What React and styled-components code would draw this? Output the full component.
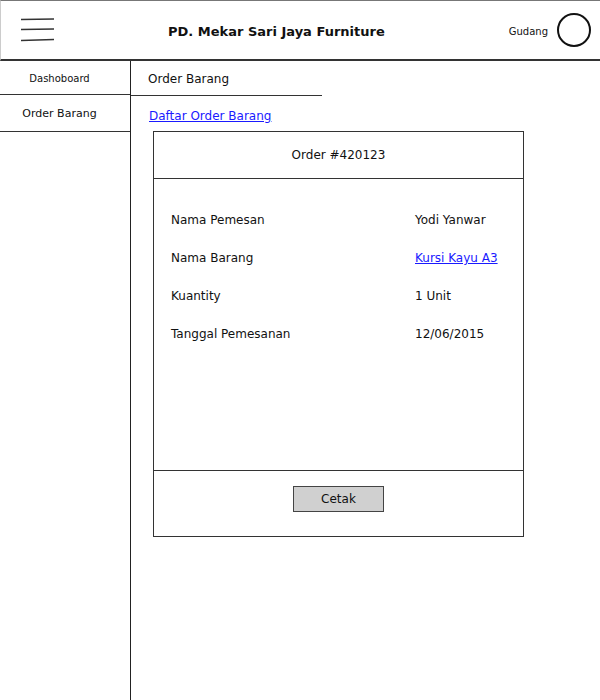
import React from "react";
import styled, { createGlobalStyle } from "styled-components";

const Global = createGlobalStyle`
	body {
		margin: 0;
		background: #fff;
		font-family: "DejaVu Sans", "Liberation Sans", sans-serif;
		color: #111;
	}
`;

const orderRows = [
	{ label: "Nama Pemesan", value: "Yodi Yanwar" },
	{ label: "Nama Barang", value: "Kursi Kayu A3", link: true },
	{ label: "Kuantity", value: "1 Unit" },
	{ label: "Tanggal Pemesanan", value: "12/06/2015" },
];

const App = () => {
	return (
		<Page>
			<Global />
			<Header>
				<Burger viewBox="0 0 36 26">
					<path d="M1 1.5 L34 1" />
					<path d="M1 11.5 L34 11" />
					<path d="M1 22.5 L34 21.5" />
				</Burger>
				<Title>PD. Mekar Sari Jaya Furniture</Title>
				<User>
					<span>Gudang</span>
					<svg width="36" height="36" viewBox="0 0 36 36">
						<circle cx="18" cy="18" r="16" fill="none" stroke="#111" strokeWidth="2" />
					</svg>
				</User>
			</Header>
			<Body>
				<Sidebar>
					<NavItem $h={34} $size={10}>Dashoboard</NavItem>
					<NavItem $h={36} $size={11}>Order Barang</NavItem>
				</Sidebar>
				<Main>
					<Tab>Order Barang</Tab>
					<Crumb href="#">Daftar Order Barang</Crumb>
					<Card>
						<CardHead>Order #420123</CardHead>
						<CardBody>
							{orderRows.map((r) => (
								<Row key={r.label}>
									<span>{r.label}</span>
									{r.link ? <Link href="#">{r.value}</Link> : <span>{r.value}</span>}
								</Row>
							))}
						</CardBody>
						<CardFoot>
							<Button>Cetak</Button>
						</CardFoot>
					</Card>
				</Main>
			</Body>
		</Page>
	);
};

const Page = styled.div`
	width: 600px;
	height: 700px;
	overflow: hidden;
`;

const Header = styled.header`
	height: 58px;
	display: flex;
	align-items: center;
	border-top: 1px solid #777;
	border-left: 1px solid #ccc;
	border-bottom: 2px solid #333;
	padding: 0 8px 0 19px;
`;

const Burger = styled.svg`
	width: 36px;
	height: 26px;
	margin-top: 2px;
	path {
		stroke: #333;
		stroke-width: 1.6;
		fill: none;
	}
`;

const Title = styled.h1`
	flex: 1;
	margin: 2px 0 0;
	text-align: center;
	font-size: 13px;
	font-weight: 700;
	padding-right: 12px;
`;

const User = styled.div`
	display: flex;
	align-items: center;
	gap: 8px;
	font-size: 10px;
	span {
		margin-top: 2px;
	}
`;

const Body = styled.div`
	display: flex;
	height: 640px;
`;

const Sidebar = styled.nav`
	width: 130px;
	flex-shrink: 0;
	border-right: 1.5px solid #222;
`;

const NavItem = styled.div`
	height: ${(p) => p.$h - 1}px;
	display: flex;
	align-items: center;
	justify-content: center;
	padding: 1px 11px 0 0;
	box-sizing: content-box;
	font-size: ${(p) => p.$size}px;
	border-bottom: 1px solid #333;
	&:first-child {
		height: ${(p) => p.$h - 2}px;
	}
`;

const Main = styled.main`
	flex: 1;
	display: flex;
	flex-direction: column;
	align-items: flex-start;
`;

const Tab = styled.div`
	width: 174px;
	height: 33px;
	padding: 2px 0 0 17px;
	box-sizing: content-box;
	display: flex;
	align-items: center;
	font-size: 12px;
	border-bottom: 1px solid #333;
	margin-top: -1px;
`;

const Crumb = styled.a`
	margin: 13px 0 0 18px;
	font-size: 12px;
	color: #1a1aff;
`;

const Card = styled.section`
	margin: 8px 0 0 22px;
	width: 369px;
	height: 404px;
	border: 1px solid #333;
	display: flex;
	flex-direction: column;
`;

const CardHead = styled.div`
	height: 46px;
	display: flex;
	align-items: center;
	justify-content: center;
	font-size: 12px;
	border-bottom: 1.5px solid #333;
`;

const CardBody = styled.div`
	flex: 1;
	padding: 22px 0 0 17px;
	border-bottom: 1.5px solid #333;
`;

const Row = styled.div`
	display: grid;
	grid-template-columns: 244px 1fr;
	height: 38px;
	align-items: center;
	font-size: 12px;
`;

const Link = styled.a`
	color: #1a1aff;
	width: max-content;
`;

const CardFoot = styled.div`
	height: 65px;
	display: flex;
	justify-content: center;
	padding-top: 15px;
	box-sizing: border-box;
`;

const Button = styled.button`
	width: 91px;
	height: 26px;
	background: #d0d0d0;
	border: 1.5px solid #444;
	font-family: inherit;
	font-size: 12px;
	color: #111;
	padding: 0;
`;

export default App;
